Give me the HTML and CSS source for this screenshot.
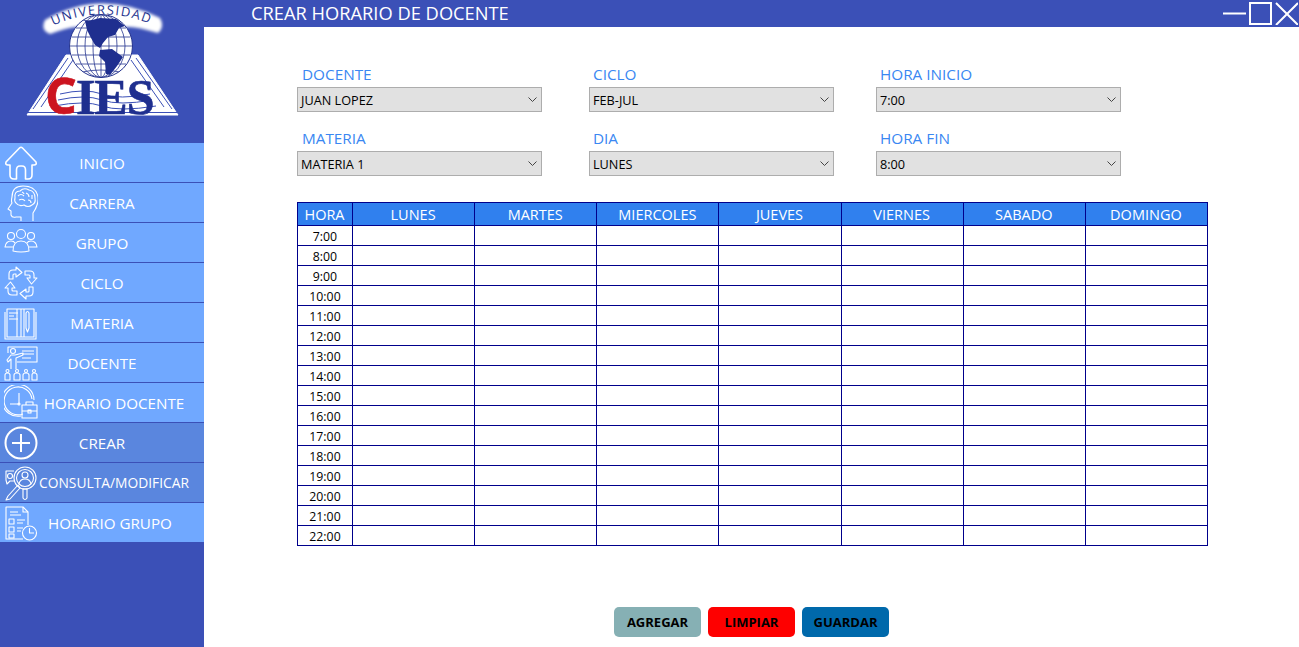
FILE: index.html
```html
<!doctype html>
<html lang="es">
<head>
  <meta charset="utf-8"/>
  <title>Crear horario de docente</title>
  <link rel="stylesheet" href="styles.css">
</head>
<body>

  <aside class="sidebar">
    <div class="logo">
      <svg width="204" height="143" viewBox="0 0 204 143">
        <defs>
          <filter id="glow" x="-20%" y="-40%" width="140%" height="180%"><feGaussianBlur stdDeviation="1.500"/></filter>
          <clipPath id="globe-clip"><circle cx="101" cy="46" r="31.5"/></clipPath>
          <path id="arc" d="M48 28 Q100 2 156 26"/>
        </defs>
        <path class="logo-arch" filter="url(#glow)" d="M45 20 Q100 -12 160 18 Q165 27 158 33 Q135 26 128 27 L76 27 Q66 28 50 34 Q40 30 45 20Z"/>
        <text class="logo-arc-text"><textPath href="#arc" startOffset="50%" text-anchor="middle">UNIVERSIDAD</textPath></text>
        <path class="logo-page" d="M27 115 L66 55 L138 55 L178 115 Z"/>
        <path class="logo-page-line" d="M33 109 L68 58 M41 107 L73 60 M172 109 L136 58 M164 107 L131 60 M28 112.5 H177"/>
        <path class="logo-page-line" d="M60 94 Q85 88 102 94 T150 94 M58 100 Q85 94 102 100 T152 100 M54 106 Q85 100 102 106 T156 106"/>
        <circle class="logo-globe" cx="101" cy="46" r="31.5"/>
        <g clip-path="url(#globe-clip)">
          <g class="logo-grid">
            <ellipse cx="101" cy="46" rx="8" ry="31.5"/>
            <ellipse cx="101" cy="46" rx="16" ry="31.5"/>
            <ellipse cx="101" cy="46" rx="24" ry="31.5"/>
            <path d="M101 14 V78 M70 46 H132 M72 37 H130 M72 55 H130 M76 28 H126 M76 64 H126 M82 20 Q101 24 120 20 M82 72 Q101 68 120 72"/>
          </g>
          <path class="logo-land" d="M85 21 L92 20 L100 18 L116 19 L125 26 L119 28 L115 35 L108 37 L103 43 L100 48 L95 45 L91 38 L87 30Z"/>
          <path class="logo-land" d="M100 50 L112 49 L123 57 L117 66 L110 75 L106 74 L105 62 L99 56Z"/>
        </g>
        <text class="logo-cies" x="45" y="114"><tspan class="logo-cies-c">C</tspan>IES</text>
      </svg>
    </div>

    <nav class="nav">
      <a class="nav-item">
        <svg class="nav-icon" viewBox="0 0 34 36"><path d="M2 17 L15.500 3 Q17 1.500 18.500 3 L32 17 Q33 20 30 20 H28 V30 Q28 34 24 34 H21.500 V25 Q21.500 21 18 21 H16 Q12.500 21 12.500 25 V34 H10 Q6 34 6 30 V20 H4 Q1 20 2 17Z"/></svg>
        <span class="nav-label">INICIO</span>
      </a>
      <a class="nav-item">
        <svg class="nav-icon thin" viewBox="0 0 34 36"><path d="M29 36 V28 Q35 19 34 12 Q32 1 19 1 Q8 1 8 12 Q7 16 8 18 L4 24 L7 26 V30 Q8 33 12 32 H17 V36"/><path d="M11 13 Q10 6 16 6 Q20 2 25 5 Q31 6 31 13 Q32 18 28 20 Q24 23 20 20 Q15 22 12 18 Q10 16 11 13Z"/><path d="M14 11 Q17 8 20 11 M22 8 Q25 9 25 12 M15 15 Q19 13 21 16 M24 15 Q27 15 27 18 M28 10 V14 M18 7 Q20 8 20 9"/></svg>
        <span class="nav-label">CARRERA</span>
      </a>
      <a class="nav-item">
        <svg class="nav-icon thin" viewBox="0 0 34 36"><circle cx="17" cy="9" r="4.500"/><circle cx="7" cy="11" r="3.500"/><circle cx="27" cy="11" r="3.500"/><path d="M9 26 Q9 16 17 16 Q25 16 25 26 Q17 28 9 26Z"/><path d="M9 22 H1 Q2 16 7 16 Q10 16 11 18 M25 22 H33 Q32 16 27 16 Q24 16 23 18"/></svg>
        <span class="nav-label">GRUPO</span>
      </a>
      <a class="nav-item">
        <svg class="nav-icon thin" viewBox="0 0 34 36">
          <path id="cycle-arrow" d="M5 14 V9 Q5 5 9 5 H12 V2 L18 7.500 L12 12 V9 H10 Q9 9 9 10 V14 Z"/>
          <use href="#cycle-arrow" transform="rotate(90 17 18)"/>
          <use href="#cycle-arrow" transform="rotate(180 17 18)"/>
          <use href="#cycle-arrow" transform="rotate(270 17 18)"/>
        </svg>
        <span class="nav-label">CICLO</span>
      </a>
      <a class="nav-item">
        <svg class="nav-icon thin" viewBox="0 0 34 36"><path d="M3 4 H17 V32 H3 Z M17 4 H30 V32 H17"/><path d="M1 7 V34 H32 V7"/><path d="M5 8 H14 M5 11 H10 M5 14 H14"/><path d="M22 8 Q23.500 5 25 8 V23 L23.500 27 L22 23Z"/><path d="M13 4 V32 M20 4 V32"/></svg>
        <span class="nav-label">MATERIA</span>
      </a>
      <a class="nav-item">
        <svg class="nav-icon thin" viewBox="0 0 34 36"><path d="M4 8 V2 H33 V17 H13"/><path d="M18 6 H30 M18 9 H30 M18 13 H27"/><circle cx="9" cy="6" r="2.500"/><path d="M7 24 V14 L4 17 L3 15 L7 10 H11 L19 8 V10 L12 13 V24"/><circle cx="3.500" cy="26" r="1.500"/><circle cx="13" cy="26" r="1.500"/><circle cx="22" cy="26" r="1.500"/><circle cx="30" cy="26" r="1.500"/><path d="M1 35 V30 Q1 28 3.500 28 Q6 28 6 30 V35Z M10 35 V30 Q10 28 13 28 Q16 28 16 30 V35Z M19 35 V30 Q19 28 22 28 Q25 28 25 30 V35Z M28 35 V30 Q28 28 30 28 Q33 28 33 30 V35Z"/></svg>
        <span class="nav-label">DOCENTE</span>
      </a>
      <a class="nav-item">
        <svg class="nav-icon thin" viewBox="0 0 34 36"><path d="M19 29 A14 14 0 1 1 28 14"/><path d="M17 31 A16 16 0 1 1 30 15"/><path d="M15 8 V19 H6"/><circle cx="15" cy="19" r="1"/><path d="M18 20 H33 V33 H18Z M22 20 V17 H29 V20 M18 26 H33 M24 25 H27 V28 H24Z"/></svg>
        <span class="nav-label nav-label-wide">HORARIO DOCENTE</span>
      </a>
      <a class="nav-item active">
        <svg class="nav-icon plus" viewBox="0 0 34 36"><circle cx="17" cy="18" r="15.500"/><path d="M17 9 V27 M8 18 H26"/></svg>
        <span class="nav-label">CREAR</span>
      </a>
      <a class="nav-item active">
        <svg class="nav-icon thin" viewBox="0 0 34 36"><circle cx="21" cy="13" r="11"/><circle cx="21" cy="13" r="8.500"/><circle cx="21" cy="10" r="3"/><path d="M15 19 Q16 14 21 14 Q26 14 27 19"/><path d="M19 24 H23 V33 Q21 36 19 33Z"/><path d="M10 6 H2 V15 L3 19 L6 16 H10"/><circle cx="6" cy="11" r="2.500"/><path d="M14 20 L4 31 L2 35 L6 34 L16 23Z"/></svg>
        <span class="nav-label nav-label-wide nav-label-small">CONSULTA/MODIFICAR</span>
      </a>
      <a class="nav-item">
        <svg class="nav-icon thin" viewBox="0 0 34 36"><path d="M24 20 V7 L19 2 H2 V34 H19"/><path d="M19 2 V7 H24"/><path d="M6 7 H14 M6 10 H17"/><path d="M5 14 H10 V19 H5Z M5 22 H10 V27 H5Z M5 29 H10 V33 H5Z"/><path d="M13 15 H21 M13 18 H19 M13 23 H19 M13 26 H17"/><circle cx="25.500" cy="28" r="7"/><path d="M25.500 23 V28 H30"/></svg>
        <span class="nav-label nav-label-mid">HORARIO GRUPO</span>
      </a>
    </nav>
  </aside>

  <main class="content">
    <header class="titlebar">
      <h1 class="title">CREAR HORARIO DE DOCENTE</h1>
      <div class="window-buttons">
        <svg width="24" height="24" viewBox="0 0 24 24"><path d="M1 12.500 H24"/></svg>
        <svg width="24" height="24" viewBox="0 0 24 24"><rect x="2" y="2" width="21" height="21"/></svg>
        <svg width="24" height="24" viewBox="0 0 24 24"><path d="M2 2 L24 24 M24 2 L2 24"/></svg>
      </div>
    </header>

    <form class="filters">
      <div class="field">
        <label class="field-label">DOCENTE</label>
        <div class="combo"><span>JUAN LOPEZ</span><svg width="9" height="5" viewBox="0 0 9 5"><path d="M0.500 0.500 L4.500 4.500 L8.500 0.500"/></svg></div>
      </div>
      <div class="field">
        <label class="field-label">CICLO</label>
        <div class="combo"><span>FEB-JUL</span><svg width="9" height="5" viewBox="0 0 9 5"><path d="M0.500 0.500 L4.500 4.500 L8.500 0.500"/></svg></div>
      </div>
      <div class="field">
        <label class="field-label">HORA INICIO</label>
        <div class="combo"><span>7:00</span><svg width="9" height="5" viewBox="0 0 9 5"><path d="M0.500 0.500 L4.500 4.500 L8.500 0.500"/></svg></div>
      </div>
      <div class="field">
        <label class="field-label">MATERIA</label>
        <div class="combo"><span>MATERIA 1</span><svg width="9" height="5" viewBox="0 0 9 5"><path d="M0.500 0.500 L4.500 4.500 L8.500 0.500"/></svg></div>
      </div>
      <div class="field">
        <label class="field-label">DIA</label>
        <div class="combo"><span>LUNES</span><svg width="9" height="5" viewBox="0 0 9 5"><path d="M0.500 0.500 L4.500 4.500 L8.500 0.500"/></svg></div>
      </div>
      <div class="field">
        <label class="field-label">HORA FIN</label>
        <div class="combo"><span>8:00</span><svg width="9" height="5" viewBox="0 0 9 5"><path d="M0.500 0.500 L4.500 4.500 L8.500 0.500"/></svg></div>
      </div>
    </form>

    <table class="schedule">
      <colgroup><col class="hour-col"><col span="7"></colgroup>
      <thead>
        <tr><th>HORA</th><th>LUNES</th><th>MARTES</th><th>MIERCOLES</th><th>JUEVES</th><th>VIERNES</th><th>SABADO</th><th>DOMINGO</th></tr>
      </thead>
      <tbody>
        <tr><td>7:00</td><td></td><td></td><td></td><td></td><td></td><td></td><td></td></tr>
        <tr><td>8:00</td><td></td><td></td><td></td><td></td><td></td><td></td><td></td></tr>
        <tr><td>9:00</td><td></td><td></td><td></td><td></td><td></td><td></td><td></td></tr>
        <tr><td>10:00</td><td></td><td></td><td></td><td></td><td></td><td></td><td></td></tr>
        <tr><td>11:00</td><td></td><td></td><td></td><td></td><td></td><td></td><td></td></tr>
        <tr><td>12:00</td><td></td><td></td><td></td><td></td><td></td><td></td><td></td></tr>
        <tr><td>13:00</td><td></td><td></td><td></td><td></td><td></td><td></td><td></td></tr>
        <tr><td>14:00</td><td></td><td></td><td></td><td></td><td></td><td></td><td></td></tr>
        <tr><td>15:00</td><td></td><td></td><td></td><td></td><td></td><td></td><td></td></tr>
        <tr><td>16:00</td><td></td><td></td><td></td><td></td><td></td><td></td><td></td></tr>
        <tr><td>17:00</td><td></td><td></td><td></td><td></td><td></td><td></td><td></td></tr>
        <tr><td>18:00</td><td></td><td></td><td></td><td></td><td></td><td></td><td></td></tr>
        <tr><td>19:00</td><td></td><td></td><td></td><td></td><td></td><td></td><td></td></tr>
        <tr><td>20:00</td><td></td><td></td><td></td><td></td><td></td><td></td><td></td></tr>
        <tr><td>21:00</td><td></td><td></td><td></td><td></td><td></td><td></td><td></td></tr>
        <tr><td>22:00</td><td></td><td></td><td></td><td></td><td></td><td></td><td></td></tr>
      </tbody>
    </table>

    <footer class="actions">
      <button class="btn btn-add">AGREGAR</button>
      <button class="btn btn-clear">LIMPIAR</button>
      <button class="btn btn-save">GUARDAR</button>
    </footer>
  </main>

</body>
</html>
```

FILE: styles.css
```css
:root {
  --navy: #3b50b7;
  --sky: #70a8ff;
  --sky-active: #5a86de;
  --accent: #3a87f2;
  --grid-line: #00008b;
}
* { margin: 0; padding: 0; box-sizing: border-box; font-family: "Open Sans", sans-serif; }
html, body { height: 100%; overflow: hidden; background-color: white; }
body { display: flex; }

.sidebar { width: 204px; flex: none; background-color: var(--navy); }
.logo { height: 143px; }
.logo svg { display: block; }
.logo-arch { fill: white; }
.logo-arc-text { font-family: "Liberation Serif", serif; font-size: 13px; letter-spacing: 1.500px; fill: #26358f; }
.logo-page { fill: white; stroke: white; stroke-width: 1; stroke-linejoin: round; }
.logo-page-line { fill: none; stroke: var(--navy); stroke-width: 1; }
.logo-globe { fill: white; stroke: #26358f; stroke-width: 1; }
.logo-land { fill: #1f2f8f; }
.logo-grid { fill: none; stroke: #26358f; stroke-width: 0.800; }
.logo-cies { font-family: "Liberation Serif", serif; font-weight: bold; font-size: 50px; letter-spacing: -1px; fill: #1f2f8f; stroke: #1f2f8f; stroke-width: 0.600; }
.logo-cies-c { fill: #cc1420; stroke: #cc1420; }

.nav-item {
  display: flex; align-items: center; height: 40px; padding-left: 4px;
  background-color: var(--sky); border-bottom: 1px solid var(--navy);
  color: white;
}
.nav-item.active { background-color: var(--sky-active); }
.nav-icon { width: 34px; height: 36px; flex: none; fill: none; stroke: white; stroke-width: 1.600; stroke-linejoin: round; }
.nav-icon.thin { stroke-width: 1.100; }
.nav-icon.plus { stroke-width: 2; }
.nav-label { flex: 1; text-align: center; font-size: 15.200px; line-height: 20px; white-space: nowrap; margin-left: -38px; }
.nav-label-wide { margin-left: -14px; }
.nav-label-mid { margin-left: -22px; }
.nav-label-small { font-size: 13.800px; }

.content { flex: 1; min-width: 0; display: flex; flex-direction: column; }
.titlebar {
  display: flex; justify-content: space-between; height: 27px; flex: none;
  background-color: var(--navy); padding-left: 47px; color: white;
}
.title { font-size: 18.300px; font-weight: 400; line-height: 25px; }
.window-buttons { display: flex; gap: 2px; padding-top: 1px; padding-right: 1px; }
.window-buttons svg { fill: none; stroke: white; stroke-width: 2; display: block; }

.filters {
  display: grid; grid-template-columns: 292px 287px 245px; row-gap: 17px;
  margin-top: 38px; margin-left: 93px;
}
.field-label { display: block; height: 20px; line-height: 18px; padding-left: 5px; margin-bottom: 2px; font-size: 15.300px; color: var(--accent); }
.field:not(:nth-child(3n+1)) .field-label { padding-left: 4px; }
.combo {
  display: flex; align-items: center; justify-content: space-between;
  width: 245px; height: 25px; padding-left: 3px; padding-right: 4px;
  background-color: #e1e1e1; border: 1px solid #adadad;
  font-size: 12.700px; color: black;
}
.combo span { padding-top: 1px; }
.combo svg { fill: none; stroke: #444; stroke-width: 1; }

.schedule { width: 911px; margin-top: 26px; margin-left: 93px; border-collapse: collapse; table-layout: fixed; }
.hour-col { width: 55px; }
.schedule th, .schedule td { border: 1px solid var(--grid-line); text-align: center; font-weight: 400; overflow: hidden; }
.schedule th { height: 23px; padding-right: 1px; background-color: #3080ee; color: white; font-size: 14.500px; }
.schedule td { height: 20px; padding-top: 2px; font-size: 12.300px; color: black; line-height: 14px; }

.actions { display: flex; justify-content: center; gap: 7px; margin-top: 61px; }
.btn { width: 87px; height: 30px; border: none; border-radius: 5px; font-size: 13px; font-weight: bold; color: black; }
.btn-add { background-color: #86b0b4; }
.btn-clear { background-color: #fe0000; }
.btn-save { background-color: #0069ab; }
```
